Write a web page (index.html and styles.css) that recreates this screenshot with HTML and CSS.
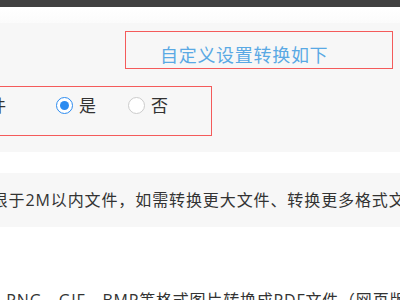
FILE: index.html
```html
<!DOCTYPE html>
<html lang="zh-CN">
<head>
    <meta charset="UTF-8">
    <meta name="viewport" content="width=device-width, initial-scale=1.0">
    <title>图片转PDF</title>
    <link rel="stylesheet" href="styles.css">
</head>
<body>
    <div class="topbar"></div>
    <div class="header"></div>
    <div class="settings">
        <div class="title-row">
            <div class="title-box">自定义设置转换如下</div>
        </div>
        <div class="option-box">
            <span class="option-label">是否合并文件</span>
            <label class="radio checked"><span class="dot"></span>是</label>
            <label class="radio"><span class="dot"></span>否</label>
        </div>
    </div>
    <div class="notice">免费版仅限于2M以内文件，如需转换更大文件、转换更多格式文件，请下载客户端</div>
    <p class="desc">支持JPG、PNG、GIF、BMP等格式图片转换成PDF文件（网页版仅支持单张图片转换）</p>
</body>
</html>
```

FILE: styles.css
```css
body, html {
    margin: 0;
    padding: 0;
    overflow: hidden;
    background: #fff;
    font-family: "Open Sans", "Noto Sans CJK SC", sans-serif;
    color: #333;
}
.topbar {
    height: 7px;
    background: #404040;
}
.header {
    height: 16px;
    background: linear-gradient(#fff, #fbfbfb);
}
.settings {
    background: #f7f7f7;
    height: 129px;
    padding-top: 8px;
    box-sizing: border-box;
}
.title-row {
    display: flex;
    padding-left: 125px;
}
.title-box {
    width: 232px;
    height: 26px;
    border: 1px solid #f45b5b;
    padding: 10px 0 0 34px;
    font-size: 18px;
    line-height: 26px;
    letter-spacing: 0.7px;
    color: #5aa9e4;
}
.option-box {
    display: flex;
    align-items: flex-start;
    margin: 17px 0 0 -120px;
    width: 332px;
    height: 50px;
    border: 1px solid #f45b5b;
    padding-top: 8px;
    box-sizing: border-box;
    font-family: "Noto Sans CJK SC", sans-serif;
    font-size: 17px;
    line-height: 20px;
}
.option-label {
    width: 125px;
    text-align: right;
    color: #333;
}
.radio {
    display: flex;
    align-items: center;
    gap: 6px;
    color: #333;
}
.radio.checked {
    margin-left: 50px;
}
.radio + .radio {
    margin-left: 32px;
}
.dot {
    width: 17px;
    height: 17px;
    border: 1px solid #ccc;
    border-radius: 50%;
    background: #fff;
    box-sizing: border-box;
    display: flex;
    justify-content: center;
    align-items: center;
}
.checked .dot {
    border-color: #2d8cf0;
}
.checked .dot::after {
    content: '';
    width: 9px;
    height: 9px;
    border-radius: 50%;
    background: #2d8cf0;
}
.notice {
    margin: 21px 0 0 -76px;
    height: 54px;
    background: #f7f7f7;
    font-size: 16px;
    line-height: 54px;
    letter-spacing: 0.9px;
    white-space: nowrap;
}
.desc {
    margin: 62px 0 0 -72px;
    font-size: 16px;
    line-height: 22px;
    letter-spacing: 0.8px;
    white-space: nowrap;
}
```
